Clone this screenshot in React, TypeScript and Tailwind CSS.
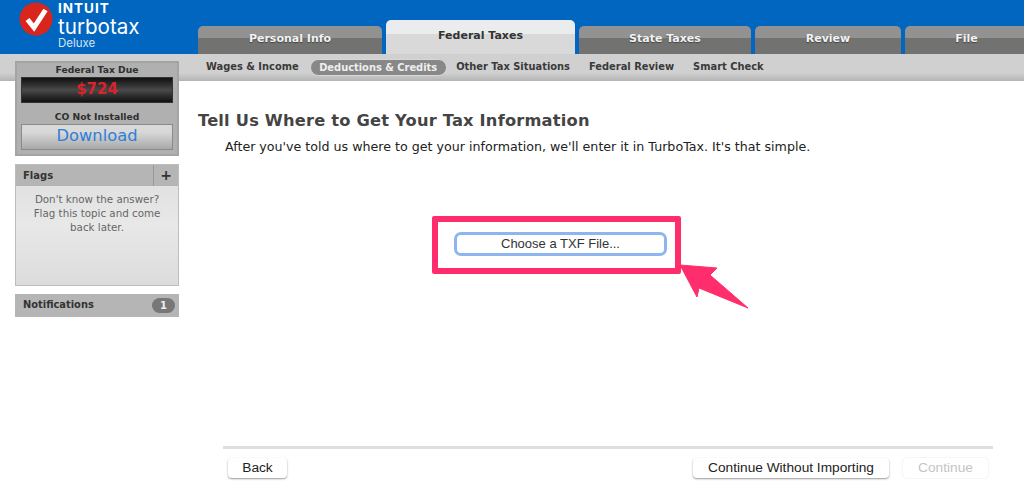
import React from 'react';

const FONT = "font-['DejaVu_Sans',sans-serif]";

const tabs = [
  { label: 'Personal Info', width: 'w-[184px]' },
  { label: 'Federal Taxes', width: 'w-[189px]', active: true },
  { label: 'State Taxes', width: 'w-[172px]' },
  { label: 'Review', width: 'w-[146px]' },
  { label: 'File', width: 'w-[123px]' },
];

const subTabs = ['Wages & Income', 'Deductions & Credits', 'Other Tax Situations', 'Federal Review', 'Smart Check'];

function Logo() {
  return (
    <div className="flex w-[198px] shrink-0 items-start pl-[19px] pt-[2px]">
      <svg width="34" height="34" viewBox="0 0 34 34" className="shrink-0">
        <circle cx="17" cy="17" r="16.5" fill="#d9261c" />
        <path d="M8.5 17.5l6.5 8L26.5 8" fill="none" stroke="#fff" strokeWidth="5" />
      </svg>
      <div className="ml-[5px] flex flex-col text-white font-['Inter',sans-serif]">
        <span className="h-[15px] text-[13.5px] font-bold leading-[12px] tracking-[1px]">INTUIT</span>
        <span className="h-[20px] text-[20.6px] leading-[20px]">turbotax</span>
        <span className="text-[11.5px] leading-[12px] text-[#d5e4f5]">Deluxe</span>
      </div>
    </div>
  );
}

function TabBar() {
  return (
    <div className="flex h-[54px] items-end gap-[4px] overflow-hidden">
      {tabs.map((tab) =>
        tab.active ? (
          <div
            key={tab.label}
            className={`${tab.width} h-[34px] shrink-0 rounded-t-[5px] bg-gradient-to-b from-[#ebecee] from-[40%] to-[#d9d9d9] to-[40%] pt-[8px] text-center text-[11px] font-bold text-[#333] ${FONT}`}
          >
            {tab.label}
          </div>
        ) : (
          <div
            key={tab.label}
            className={`${tab.width} h-[28px] shrink-0 rounded-t-[5px] bg-gradient-to-b from-[#929292] from-[42%] to-[#727371] to-[42%] pt-[5px] text-center text-[11px] font-bold text-[#f2f2f2] [text-shadow:0_1px_1px_#444] ${FONT}`}
          >
            {tab.label}
          </div>
        ),
      )}
    </div>
  );
}

function SubNav() {
  return (
    <div className="flex h-[27px] items-center bg-gradient-to-b from-[#d0d0d0] from-[70%] to-[#b4b4b4] pl-[196.5px]">
      {subTabs.map((item) =>
        item === 'Deductions & Credits' ? (
          <span
            key={item}
            className={`ml-[1.5px] h-[17px] w-[137px] rounded-full border border-[#d8d8d8] bg-[#888] text-center text-[9.9px] font-bold leading-[15px] text-[#eee] ${FONT}`}
          >
            {item}
          </span>
        ) : (
          <span key={item} className={`px-[9.5px] text-[9.9px] font-bold text-[#3a3a3a] ${FONT}`}>
            {item}
          </span>
        ),
      )}
    </div>
  );
}

function Sidebar() {
  return (
    <aside className={`relative z-10 -mt-[20px] ml-[15px] flex w-[164px] shrink-0 flex-col ${FONT}`}>
      <div className="flex h-[95px] flex-col items-center border-2 border-[#a4a4a4] bg-[#b0b0b0] px-[4px]">
        <div className="text-[9.2px] font-bold leading-[13px] text-[#2f2f2f]">Federal Tax Due</div>
        <div className="mt-[1px] h-[26px] w-full border border-[#333] bg-gradient-to-b from-[#111] via-[#4a4a4a] to-[#111] text-center text-[15px] font-bold leading-[22px] text-[#d8242a]">
          $724
        </div>
        <div className="mt-[7px] text-[9.2px] font-bold leading-[13px] text-[#2f2f2f]">CO Not Installed</div>
        <div className="mt-[1px] h-[26px] w-full border border-[#8a8a8a] bg-gradient-to-b from-[#d8d8d8] from-[30%] to-[#a9a9a9] text-center text-[16.3px] leading-[22px] text-[#2f7fd8]">
          Download
        </div>
      </div>

      <div className="mt-[8px] flex h-[122px] flex-col border border-[#bdbdbd] bg-gradient-to-b from-[#dedede] via-[#e8e8e8] to-[#dcdcdc]">
        <div className="flex h-[21px] items-center bg-[#b5b5b5] text-[10px] font-bold text-[#333]">
          <span className="flex-1 pl-[7px]">Flags</span>
          <span className="flex h-full w-[25px] items-center justify-center border-l border-[#999] text-[14px]">+</span>
        </div>
        <p className="px-[9px] pt-[6px] text-center text-[10.3px] leading-[14px] text-[#666]">
          Don't know the answer? Flag this topic and come back later.
        </p>
      </div>

      <div className="mt-[8px] flex h-[23px] items-center justify-between bg-[#b5b5b5] pl-[8px] pr-[4px]">
        <span className="text-[9.9px] font-bold text-[#333]">Notifications</span>
        <span className="h-[15px] w-[23px] rounded-full bg-[#777] text-center text-[10px] font-bold leading-[15px] text-[#eee]">1</span>
      </div>
    </aside>
  );
}

function Annotation() {
  return (
    <>
      <div className="pointer-events-none absolute left-[432px] top-[216px] h-[58px] w-[249px] rounded-[2px] border-[6px] border-[#ff2d6b]" />
      <svg className="pointer-events-none absolute left-[678px] top-[260px]" width="76" height="54" viewBox="0 0 76 54">
        <path d="M2 5L39 8L32 15L70 48L21 28L19 37Z" fill="#ff2d6b" stroke="#ff2d6b" strokeWidth="1" strokeLinejoin="round" />
      </svg>
    </>
  );
}

function FooterButton({ label, className, disabled }: { label: string; className: string; disabled?: boolean }) {
  return (
    <button
      disabled={disabled}
      className={`h-[20px] rounded-[4px] bg-white text-[13.7px] font-['Liberation_Sans',sans-serif] ${
        disabled ? 'text-[#c4c4c4] shadow-[0_0_2px_#ddd]' : 'text-[#222] shadow-[0_1px_2px_#999]'
      } ${className}`}
    >
      {label}
    </button>
  );
}

export default function App() {
  return (
    <div className="relative h-[494px] w-[1024px] overflow-hidden bg-white">
      <header className="flex h-[54px] bg-[#0066bf]">
        <Logo />
        <TabBar />
      </header>
      <SubNav />
      <div className="flex h-[413px]">
        <Sidebar />
        <main className={`ml-[19px] flex flex-1 flex-col pb-[16px] ${FONT}`}>
          <h1 className="mt-[29px] text-[16.25px] font-bold leading-[22px] tracking-[0.2px] text-[#444]">
            Tell Us Where to Get Your Tax Information
          </h1>
          <p className="ml-[27px] mt-[7px] text-[12.65px] leading-[16px] text-[#222]">
            After you've told us where to get your information, we'll enter it in TurboTax. It's that simple.
          </p>
          <button className="ml-[256px] mt-[77px] h-[24px] w-[213px] rounded-[7px] border-[3px] border-[#8fb5f0] bg-white text-[13px] leading-[16px] text-[#333] font-['Liberation_Sans',sans-serif]">
            Choose a TXF File...
          </button>
          <div className="ml-[25px] mr-[31px] mt-auto h-[3px] bg-[#dedede]" />
          <div className="ml-[30px] mr-[36px] mt-[9px] flex items-center">
            <FooterButton label="Back" className="w-[59px]" />
            <FooterButton label="Continue Without Importing" className="ml-auto w-[196px]" />
            <FooterButton label="Continue" className="ml-[14px] w-[85px]" disabled />
          </div>
        </main>
      </div>
      <Annotation />
    </div>
  );
}
